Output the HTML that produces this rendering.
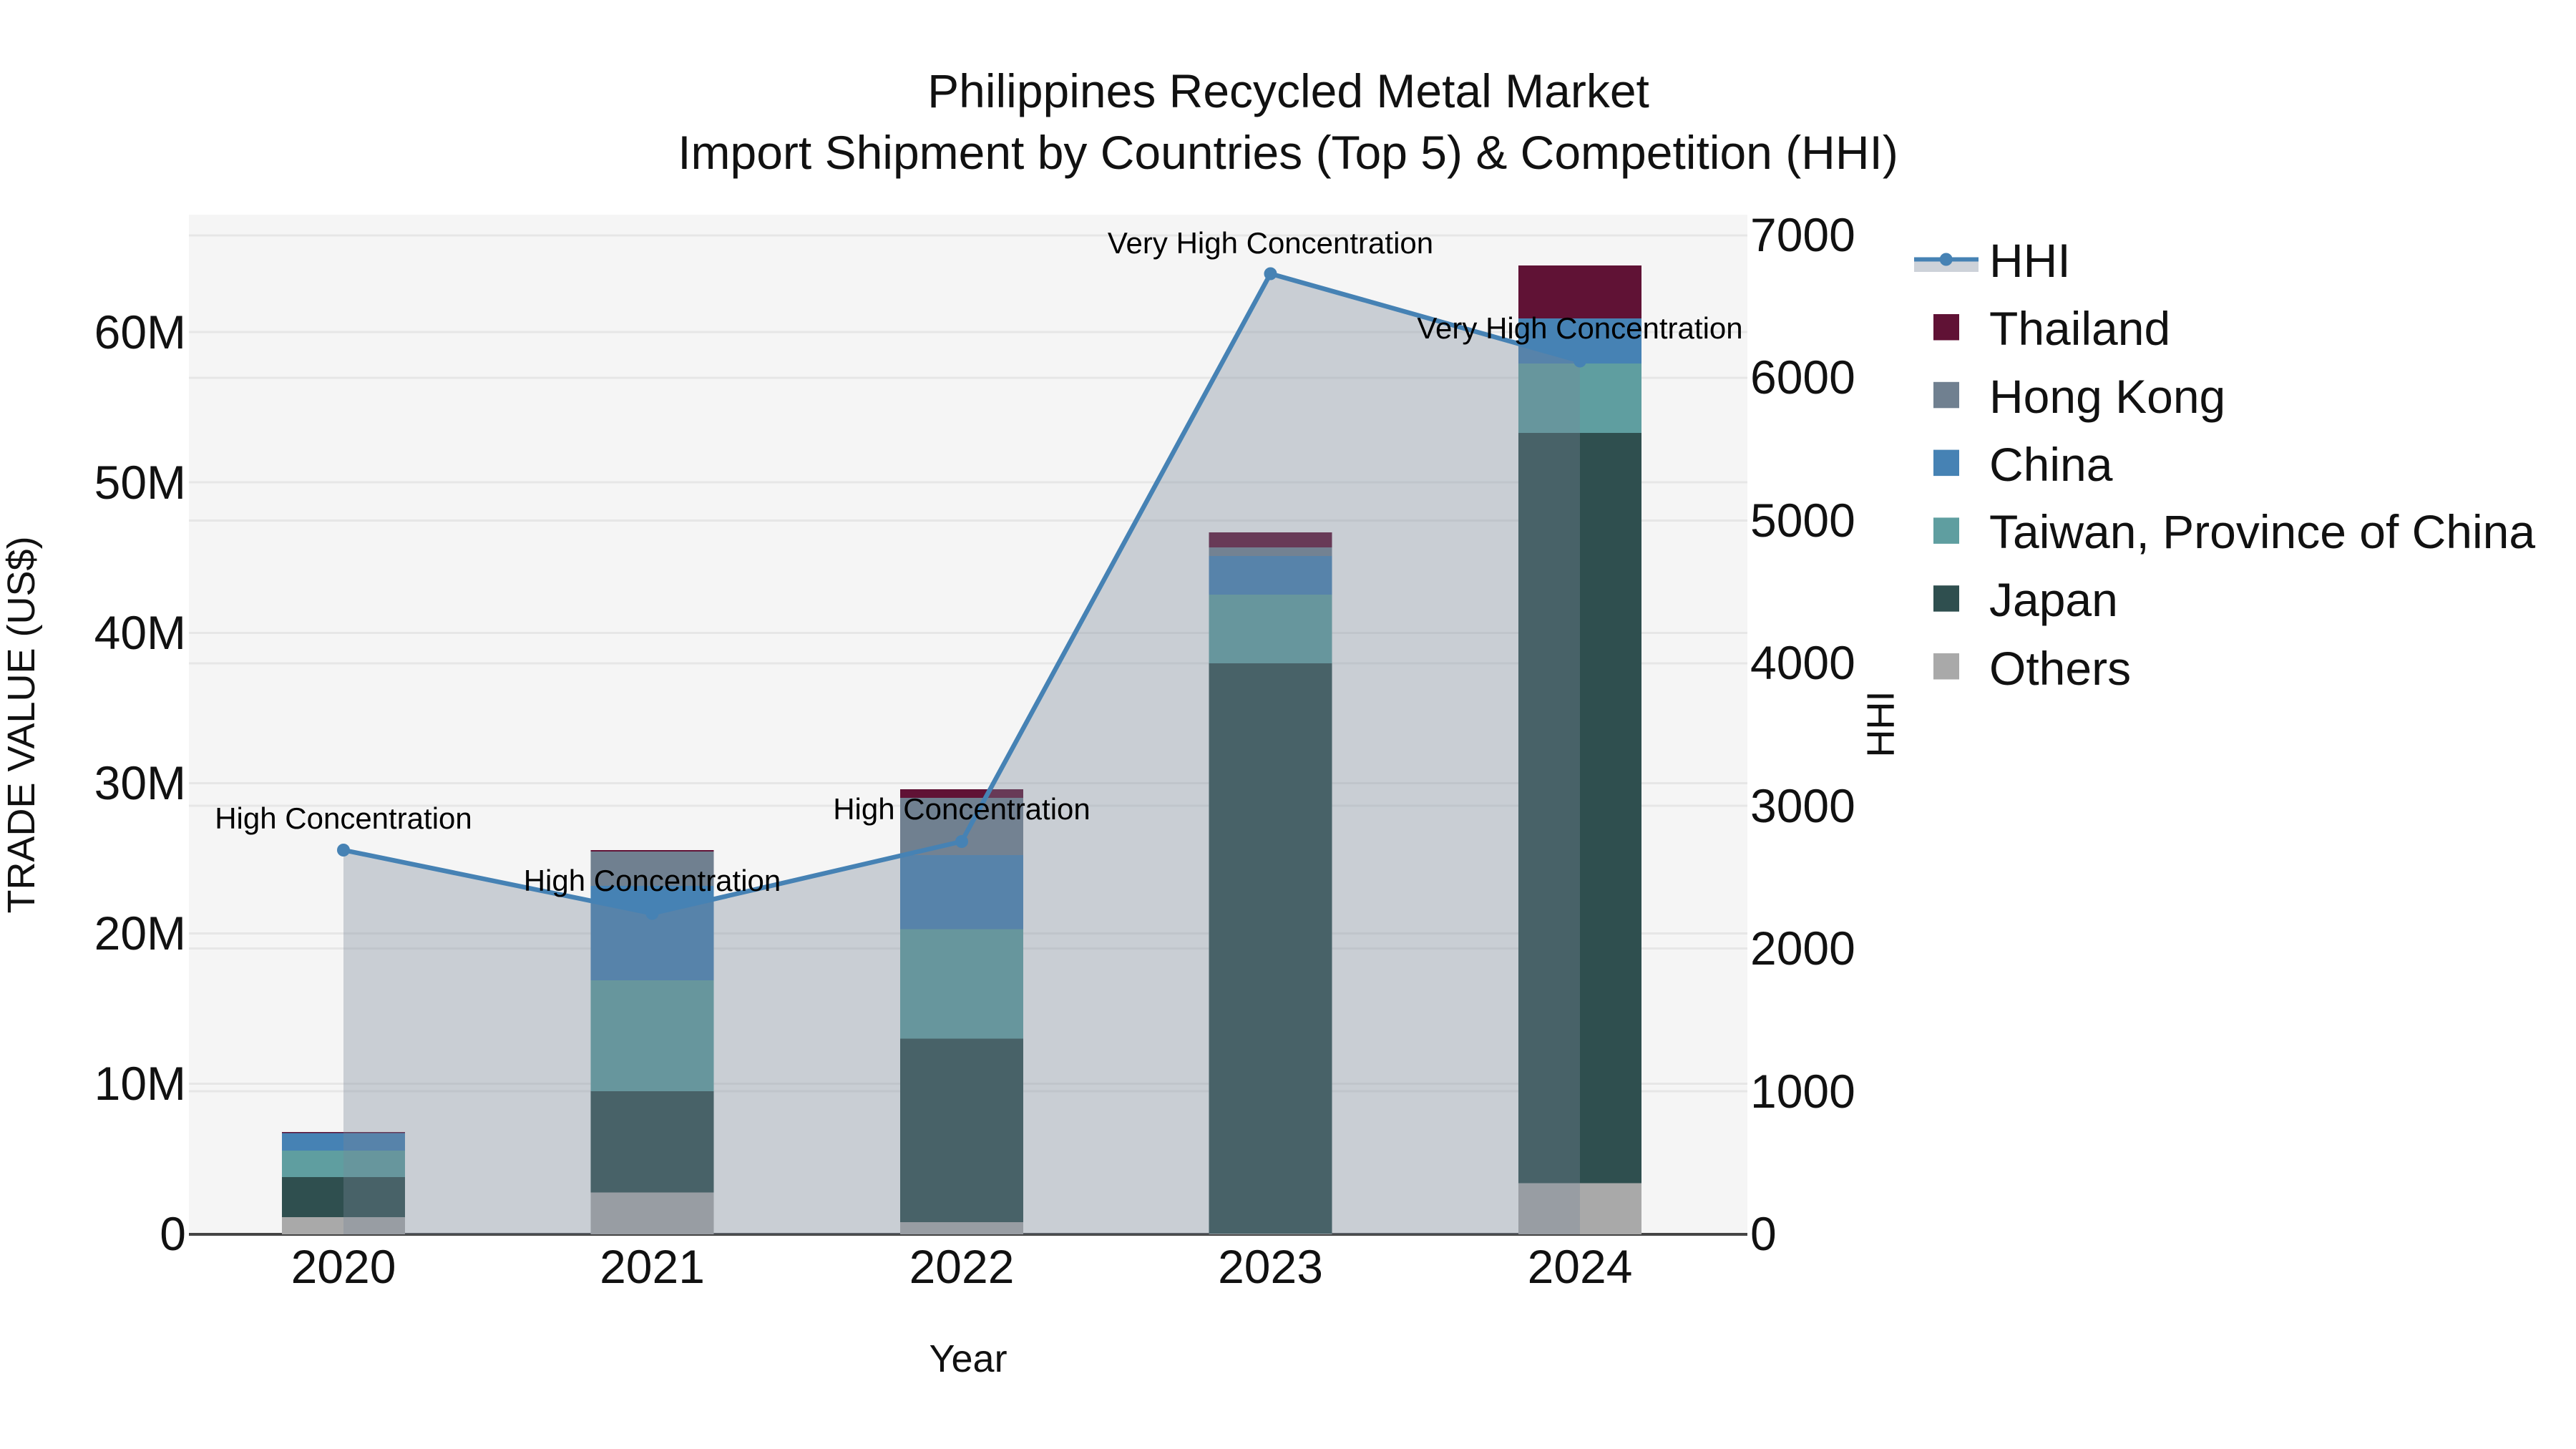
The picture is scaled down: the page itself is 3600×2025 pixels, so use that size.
<!DOCTYPE html>
<html>
<head>
<meta charset="utf-8">
<style>
html,body{margin:0;padding:0;background:#fff;width:3600px;height:2025px;overflow:hidden}
svg{display:block}
text{font-family:"Liberation Sans",Arial,sans-serif;fill:#111}
.t{font-size:66px}
.a{font-size:42px;fill:#000;text-anchor:middle}
.tl{text-anchor:end}
.tc{text-anchor:middle}
.g line{stroke:#e6e6e6;stroke-width:3}
</style>
</head>
<body>
<svg width="3600" height="2025" viewBox="0 0 3600 2025" xmlns="http://www.w3.org/2000/svg">
<rect width="3600" height="2025" fill="#fff"/>
<rect x="264" y="300" width="2178" height="1425" fill="#f5f5f5"/>

<g class="g">
<line x1="264" x2="2442" y1="464" y2="464"/>
<line x1="264" x2="2442" y1="674" y2="674"/>
<line x1="264" x2="2442" y1="884.5" y2="884.5"/>
<line x1="264" x2="2442" y1="1094.5" y2="1094.5"/>
<line x1="264" x2="2442" y1="1304.5" y2="1304.5"/>
<line x1="264" x2="2442" y1="1514.5" y2="1514.5"/>
<line x1="264" x2="2442" y1="329" y2="329"/>
<line x1="264" x2="2442" y1="528" y2="528"/>
<line x1="264" x2="2442" y1="727.5" y2="727.5"/>
<line x1="264" x2="2442" y1="927" y2="927"/>
<line x1="264" x2="2442" y1="1126" y2="1126"/>
<line x1="264" x2="2442" y1="1325.5" y2="1325.5"/>
<line x1="264" x2="2442" y1="1525" y2="1525"/>
</g>
<line x1="264" x2="2442" y1="1725" y2="1725" stroke="#444" stroke-width="4"/>

<!-- bars 2020 -->
<rect x="394" y="1701" width="172" height="24" fill="#a9a9a9"/>
<rect x="394" y="1645" width="172" height="56" fill="#2f4f4f"/>
<rect x="394" y="1608" width="172" height="37" fill="#5f9ea0"/>
<rect x="394" y="1583" width="172" height="25" fill="#4682b4"/>
<rect x="394" y="1582" width="172" height="1.5" fill="#601235"/>
<!-- bars 2021 -->
<rect x="825.5" y="1666.5" width="172" height="58.5" fill="#a9a9a9"/>
<rect x="825.5" y="1525" width="172" height="141.5" fill="#2f4f4f"/>
<rect x="825.5" y="1370" width="172" height="155" fill="#5f9ea0"/>
<rect x="825.5" y="1238" width="172" height="132" fill="#4682b4"/>
<rect x="825.5" y="1190" width="172" height="48" fill="#708090"/>
<rect x="825.5" y="1188" width="172" height="2" fill="#601235"/>
<!-- bars 2022 -->
<rect x="1258" y="1708" width="172" height="17" fill="#a9a9a9"/>
<rect x="1258" y="1451.5" width="172" height="256.5" fill="#2f4f4f"/>
<rect x="1258" y="1298.5" width="172" height="153" fill="#5f9ea0"/>
<rect x="1258" y="1195" width="172" height="103.5" fill="#4682b4"/>
<rect x="1258" y="1115" width="172" height="80" fill="#708090"/>
<rect x="1258" y="1103" width="172" height="12" fill="#601235"/>
<!-- bars 2023 -->
<rect x="1689.5" y="1724" width="172" height="1" fill="#a9a9a9"/>
<rect x="1689.5" y="927" width="172" height="797" fill="#2f4f4f"/>
<rect x="1689.5" y="831" width="172" height="96" fill="#5f9ea0"/>
<rect x="1689.5" y="777" width="172" height="54" fill="#4682b4"/>
<rect x="1689.5" y="765" width="172" height="12" fill="#708090"/>
<rect x="1689.5" y="744" width="172" height="21" fill="#601235"/>
<!-- bars 2024 -->
<rect x="2122" y="1653.5" width="172" height="71.5" fill="#a9a9a9"/>
<rect x="2122" y="605" width="172" height="1048.5" fill="#2f4f4f"/>
<rect x="2122" y="508" width="172" height="97" fill="#5f9ea0"/>
<rect x="2122" y="445" width="172" height="63" fill="#4682b4"/>
<rect x="2122" y="371" width="172" height="74" fill="#601235"/>

<!-- HHI fill + line -->
<polygon points="480,1188 911.5,1276.5 1344,1176 1775.5,382.5 2208,504.5 2208,1725 480,1725" fill="rgba(119,136,153,0.35)"/>
<polyline points="480,1188 911.5,1276.5 1344,1176 1775.5,382.5 2208,504.5" fill="none" stroke="#4682b4" stroke-width="6.5" stroke-linejoin="round"/>
<circle cx="480" cy="1188" r="9" fill="#4682b4"/>
<circle cx="911.5" cy="1276.5" r="9" fill="#4682b4"/>
<circle cx="1344" cy="1176" r="9" fill="#4682b4"/>
<circle cx="1775.5" cy="382.5" r="9" fill="#4682b4"/>
<circle cx="2208" cy="504.5" r="9" fill="#4682b4"/>

<!-- annotations -->
<text class="a" x="480" y="1158">High Concentration</text>
<text class="a" x="911.5" y="1245">High Concentration</text>
<text class="a" x="1344" y="1145">High Concentration</text>
<text class="a" x="1775.5" y="354">Very High Concentration</text>
<text class="a" x="2208" y="473">Very High Concentration</text>

<!-- title -->
<text class="t tc" x="1800.5" y="150">Philippines Recycled Metal Market</text>
<text class="t tc" x="1800" y="236">Import Shipment by Countries (Top 5) &amp; Competition (HHI)</text>

<!-- left ticks -->
<text class="t tl" x="260" y="487">60M</text>
<text class="t tl" x="260" y="697">50M</text>
<text class="t tl" x="260" y="907">40M</text>
<text class="t tl" x="260" y="1117">30M</text>
<text class="t tl" x="260" y="1327">20M</text>
<text class="t tl" x="260" y="1537">10M</text>
<text class="t tl" x="260" y="1747">0</text>

<!-- right ticks -->
<text class="t" x="2446" y="351">7000</text>
<text class="t" x="2446" y="550">6000</text>
<text class="t" x="2446" y="750">5000</text>
<text class="t" x="2446" y="949">4000</text>
<text class="t" x="2446" y="1149">3000</text>
<text class="t" x="2446" y="1348">2000</text>
<text class="t" x="2446" y="1548">1000</text>
<text class="t" x="2446" y="1747">0</text>

<!-- x ticks -->
<text class="t tc" x="480" y="1793">2020</text>
<text class="t tc" x="911.5" y="1793">2021</text>
<text class="t tc" x="1344" y="1793">2022</text>
<text class="t tc" x="1775.5" y="1793">2023</text>
<text class="t tc" x="2208" y="1793">2024</text>

<!-- axis titles -->
<text class="tc" x="1353" y="1917" style="font-size:54px">Year</text>
<text class="tc" transform="translate(48,1013) rotate(-90)" style="font-size:54px">TRADE VALUE (US$)</text>
<text class="tc" transform="translate(2646.5,1012) rotate(-90)" style="font-size:54px">HHI</text>

<!-- legend -->
<rect x="2675" y="362" width="90" height="18" fill="#cdd2d9"/>
<line x1="2675" x2="2765" y1="362.5" y2="362.5" stroke="#4682b4" stroke-width="6"/>
<circle cx="2719.7" cy="362.5" r="9" fill="#4682b4"/>
<rect x="2702" y="439" width="36" height="36.5" fill="#601235"/>
<rect x="2702" y="533.8" width="36" height="36.5" fill="#708090"/>
<rect x="2702" y="628.6" width="36" height="36.5" fill="#4682b4"/>
<rect x="2702" y="723.4" width="36" height="36.5" fill="#5f9ea0"/>
<rect x="2702" y="818.2" width="36" height="36.5" fill="#2f4f4f"/>
<rect x="2702" y="913" width="36" height="36.5" fill="#a9a9a9"/>
<text class="t" x="2780" y="387">HHI</text>
<text class="t" x="2780" y="482">Thailand</text>
<text class="t" x="2780" y="577">Hong Kong</text>
<text class="t" x="2780" y="672">China</text>
<text class="t" x="2780" y="766">Taiwan, Province of China</text>
<text class="t" x="2780" y="861">Japan</text>
<text class="t" x="2780" y="957">Others</text>
</svg>
</body>
</html>
